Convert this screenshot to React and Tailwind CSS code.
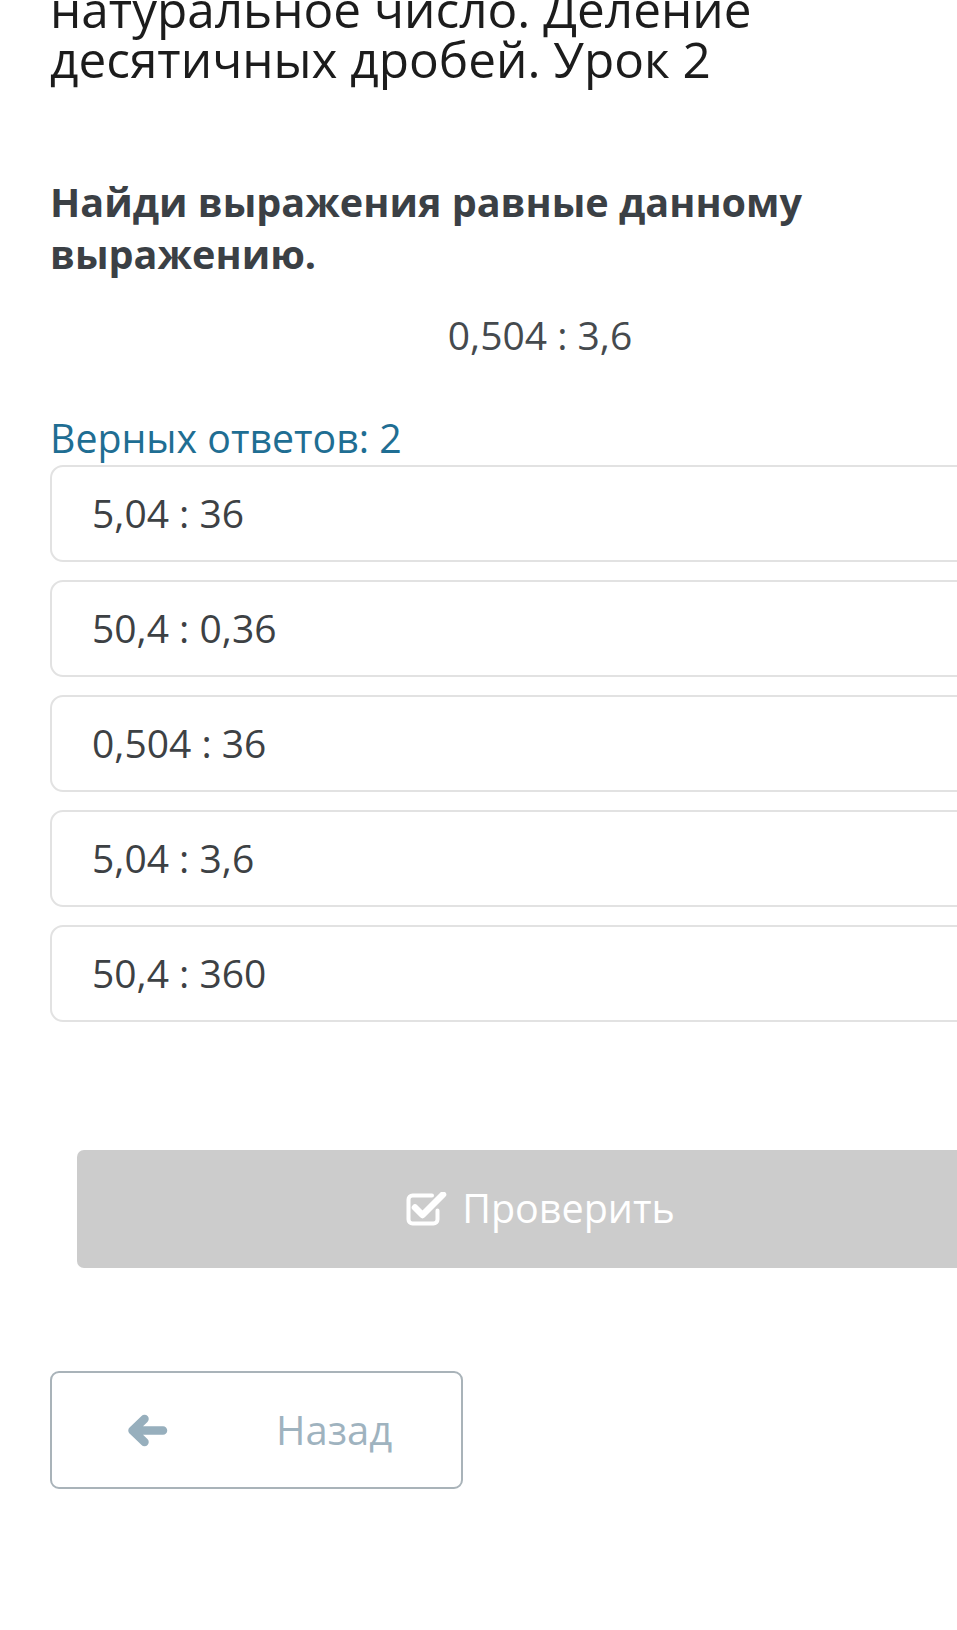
const OPTIONS = ['5,04 : 36', '50,4 : 0,36', '0,504 : 36', '5,04 : 3,6', '50,4 : 360']

function CheckSquareIcon() {
  return (
    <svg width="42" height="35" viewBox="0 0 42 35" fill="none">
      <path
        d="M27 3.5H7.5a4 4 0 0 0-4 4v20a4 4 0 0 0 4 4h21a4 4 0 0 0 4-4v-9"
        stroke="white"
        strokeWidth="4"
        strokeLinecap="round"
      />
      <path d="M10 15.5l7.5 7.5L38 2.5" stroke="white" strokeWidth="6.5" strokeLinejoin="round" strokeLinecap="round" />
    </svg>
  )
}

function ArrowLeftIcon() {
  return (
    <svg width="41" height="33" viewBox="0 0 41 33" fill="none">
      <path
        d="M17.5 5L5.5 16.5L17.5 28M6.5 16.5H36"
        stroke="#97afbd"
        strokeWidth="8.5"
        strokeLinecap="round"
        strokeLinejoin="round"
      />
    </svg>
  )
}

export default function App() {
  return (
    <div className="w-[957px] h-[1630px] overflow-hidden bg-white font-['Open_Sans',sans-serif]">
      <div className="ml-[50px] w-[980px] -mt-[16px] flex flex-col">
        {/* lesson title, scrolled so its first lines are off screen */}
        <h1 className="text-[49.5px] leading-[50px] font-normal text-[#1c1c1c]">
          натуральное число. Деление
          <br />
          десятичных дробей. Урок 2
        </h1>

        {/* task */}
        <p className="mt-[92px] text-[39.6px] leading-[52px] font-bold text-[#3b4045]">
          Найди выражения равные данному
          <br />
          выражению.
        </p>
        <p className="mt-[29px] text-center text-[39px] leading-[52px] text-[#454a4e]">0,504 : 3,6</p>

        <p className="mt-[53px] text-[39.3px] leading-[48px] text-[#1f6e93]">Верных ответов: 2</p>

        <div className="mt-[3px] flex flex-col gap-[18px]">
          {OPTIONS.map(opt => (
            <div
              key={opt}
              className="h-[97px] flex items-center pl-[40px] border-2 border-[#e2e2e2] rounded-[13px] text-[39px] text-[#3d4144]"
            >
              {opt}
            </div>
          ))}
        </div>

        <button className="mt-[128px] ml-[27px] w-[926px] h-[118px] rounded-[7px] bg-[#cccccc] flex items-center justify-center gap-[15px] text-white text-[39.5px]">
          <CheckSquareIcon />
          <span>Проверить</span>
        </button>

        <button className="mt-[103px] w-[413px] h-[118px] rounded-[9px] border-2 border-[#a9b3b9] bg-white flex items-center pl-[75px] text-[#9fb3bf] text-[40px]">
          <ArrowLeftIcon />
          <span className="ml-[108px]">Назад</span>
        </button>
      </div>
    </div>
  )
}
